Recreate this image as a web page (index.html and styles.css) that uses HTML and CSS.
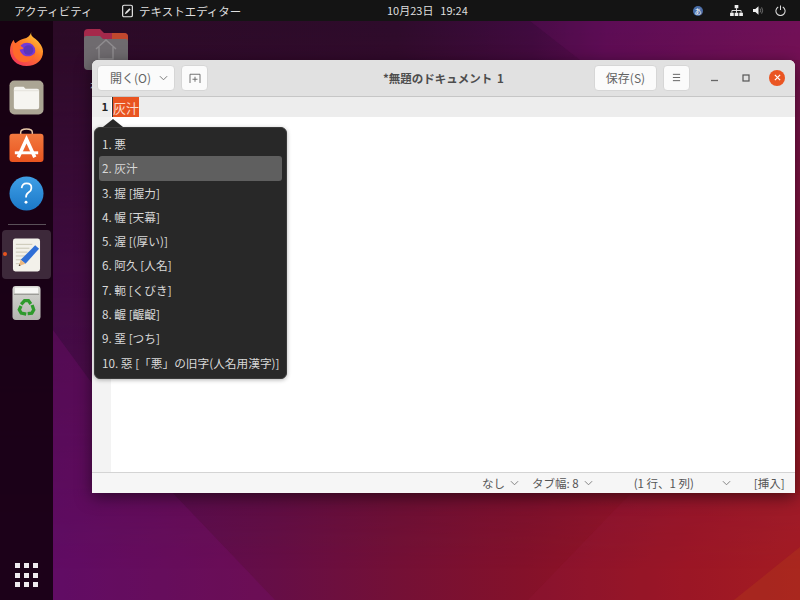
FILE: index.html
```html
<!DOCTYPE html>
<html lang="ja">
<head>
<meta charset="utf-8">
<title>テキストエディター</title>
<link rel="stylesheet" href="styles.css">
</head>
<body>
<div class="screen">
  <svg class="wallpaper" viewBox="0 0 800 600" preserveAspectRatio="none" aria-hidden="true">
    <defs>
      <linearGradient id="wallTop" gradientUnits="userSpaceOnUse" x1="53" y1="0" x2="800" y2="0">
        <stop offset="0" stop-color="#2b0a26"/>
        <stop offset="0.46" stop-color="#2e0b2b"/>
        <stop offset="0.64" stop-color="#3f0a3f"/>
        <stop offset="0.74" stop-color="#560c50"/>
        <stop offset="1" stop-color="#6f1152"/>
      </linearGradient>
      <linearGradient id="wallBottom" gradientUnits="userSpaceOnUse" x1="53" y1="0" x2="800" y2="0">
        <stop offset="0" stop-color="#560c5e"/>
        <stop offset="0.3" stop-color="#660e46"/>
        <stop offset="0.46" stop-color="#741036"/>
        <stop offset="0.63" stop-color="#84112a"/>
        <stop offset="0.85" stop-color="#9b161f"/>
        <stop offset="1" stop-color="#a51c1c"/>
      </linearGradient>
      <linearGradient id="fade" x1="0" y1="0" x2="0" y2="1">
        <stop offset="0.05" stop-color="#fff"/>
        <stop offset="0.95" stop-color="#000"/>
      </linearGradient>
      <mask id="fadeMask"><rect width="800" height="600" fill="url(#fade)"/></mask>
    </defs>
    <rect width="800" height="600" fill="url(#wallBottom)"/>
    <rect width="800" height="600" fill="url(#wallTop)" mask="url(#fadeMask)"/>
    <polygon points="53,330 170,490 275,600 53,600" fill="#7c1078" opacity=".28"/>
    <polygon points="528,600 629,495 800,495 800,600" fill="#a0184a" opacity=".15"/>
    <polygon points="734,600 800,547 800,600" fill="#b23a1a" opacity=".4"/>
    <polygon points="580,60 800,60 800,21 530,21" fill="#7a1070" opacity=".18"/>
  </svg>

  <header class="topbar">
    <div class="top-left">
      <span class="activities">アクティビティ</span>
      <span class="app-menu">
        <svg class="app-icon" viewBox="0 0 12 14"><rect x="0.700" y="0.700" width="10.600" height="12.600" rx="1.500" fill="none" stroke="#e6e6e6" stroke-width="1.300"/><path d="M3 10.500l1-2.500 4-4 1.400 1.400-4 4z" fill="#e6e6e6"/></svg>
        テキストエディター
      </span>
    </div>
    <div class="clock">10月23日&nbsp; 19:24</div>
    <div class="tray">
      <span class="ime">あ</span>
      <svg class="tray-net" viewBox="0 0 14 12"><path d="M5 0h4v3.500H5zM0 8.500h4V12H0zM10 8.500h4V12h-4zM5 8.500h4V12H5z" fill="#eee"/><path d="M7 3.500v5M2 8.500V6h10v2.500" fill="none" stroke="#eee"/></svg>
      <svg class="tray-vol" viewBox="0 0 14 12"><path d="M0 4h3l4-3.500v11L3 8H0z" fill="#eee"/><path d="M9 3.500q1.500 2.500 0 5M11 2q2.500 4 0 8" fill="none" stroke="#888"/></svg>
      <svg class="tray-pow" viewBox="0 0 12 12"><path d="M3.500 2.200a5 5 0 1 0 5 0M6 0.500v5" fill="none" stroke="#ddd" stroke-width="1.100"/></svg>
    </div>
  </header>

  <div class="desk">
    <nav class="dock">
      <svg class="dock-icon" viewBox="0 0 36 36">
        <defs>
          <linearGradient id="ffo" x1="0.850" y1="0" x2="0.150" y2="1"><stop offset="0" stop-color="#ffd43a"/><stop offset="0.45" stop-color="#ff7a25"/><stop offset="1" stop-color="#f0305f"/></linearGradient>
        </defs>
        <path d="M23 0c-1 3 1 5 4 7 5 4 8 9 8 13 0 9-7 15-17 15C8 35 1 28 1 19 1 14 3 10 5 8c0 2 1 3 2 4 2-3 5-4 8-5 4-1 7-3 8-7z" fill="url(#ffo)"/>
        <circle cx="18.500" cy="19.500" r="8.500" fill="#7339d6"/>
        <path d="M4 13c2-1 4-3 8-3-1 1-2 2-2 3 3 2 5 3 5 4-1 1-3 1-4 1 1 4 4 7 8 7 3 0 6-1 8-4-1 6-6 10-11 10-7 0-12-6-12-12z" fill="#ff6a2a"/>
        <circle cx="20" cy="18.500" r="5" fill="#5a35b8"/>
      </svg>
      <svg class="dock-icon" viewBox="0 0 36 36">
        <rect x="0.500" y="0.500" width="35" height="35" rx="5" fill="#aba594"/>
        <path d="M5 9q0-2 2-2h8l2 2h12q2 0 2 2v17q0 2-2 2H7q-2 0-2-2z" fill="#f6f5f1"/>
        <path d="M5 11h26" stroke="#e4e2db"/>
      </svg>
      <svg class="dock-icon" viewBox="0 0 36 36">
        <defs><linearGradient id="bag" x1="0" y1="0" x2="0" y2="1"><stop offset="0" stop-color="#f2793f"/><stop offset="1" stop-color="#e9541f"/></linearGradient></defs>
        <path d="M12 7V4.500q0-3.500 6-3.500t6 3.500V7" fill="none" stroke="#e8c8a8" stroke-width="1.500"/>
        <rect x="0.500" y="6" width="35" height="29" rx="3" fill="url(#bag)"/>
        <path d="M9.500 30L18 11.500 26.500 30" fill="none" stroke="#fff" stroke-width="3.600"/>
        <path d="M6 25.500h24" stroke="#fff" stroke-width="3"/>
      </svg>
      <svg class="dock-icon" viewBox="0 0 36 36">
        <defs><linearGradient id="hlp" x1="0" y1="0" x2="0" y2="1"><stop offset="0" stop-color="#3f9fe6"/><stop offset="1" stop-color="#1b78c8"/></linearGradient></defs>
        <circle cx="18" cy="18" r="17.500" fill="url(#hlp)"/>
        <path d="M13 12.500q0.500-5 5-5 5.500 0 5 5 0 2.500-3 4.500-2.500 1.500-2.500 5" fill="none" stroke="#fff" stroke-width="1.800"/>
        <circle cx="17.500" cy="27" r="1.500" fill="#fff"/>
      </svg>
      <div class="dock-sep"></div>
      <div class="dock-active">
        <span class="dock-dot"></span>
        <svg class="dock-icon" viewBox="0 0 30 36">
          <rect x="1" y="1" width="28" height="34" rx="2.500" fill="#f3f1ea"/>
          <path d="M4 7h17M4 11h14M4 15h12M4 19h10M4 23h8M4 27h6" stroke="#c9c5b3"/>
          <path d="M24 8l4 3.500-14 15.500-5-4z" fill="#2f6ed6"/>
          <path d="M9 23l5 4-7 2.500z" fill="#eab77f"/>
          <path d="M7.500 27.500l-.5 2 2-.7z" fill="#333"/>
        </svg>
      </div>
      <svg class="dock-icon trash" viewBox="0 0 30 36">
        <defs>
          <linearGradient id="trs" x1="0" y1="0" x2="0" y2="1"><stop offset="0" stop-color="#d6d6d2"/><stop offset="1" stop-color="#b4b4b0"/></linearGradient>
          <path id="rec" d="M9.500 19.500L13 15.500h4l2.500 3.500" fill="none" stroke="#2e9a2c" stroke-width="3.400"/>
        </defs>
        <rect x="0.500" y="0.500" width="29" height="35" rx="3.500" fill="url(#trs)"/>
        <rect x="3" y="2" width="24" height="6" fill="#f7f7f5"/>
        <path d="M2 9h26" stroke="#8d8d89"/>
        <g>
          <use href="#rec"/>
          <use href="#rec" transform="rotate(120 15 23)"/>
          <use href="#rec" transform="rotate(240 15 23)"/>
        </g>
      </svg>
      <div class="dock-spacer"></div>
      <div class="app-grid">
        <i></i><i></i><i></i><i></i><i></i><i></i><i></i><i></i><i></i>
      </div>
    </nav>

    <div class="desktop">
      <div class="home-folder">
        <svg class="folder" viewBox="0 0 44 42">
          <path d="M0 5q0-4 4-4h12l4 4h20q4 0 4 4v4H0z" fill="#a5294b"/>
          <path d="M28 5h12q4 0 4 4v4H28z" fill="#c1482e"/>
          <path d="M0 10q0-2 2-2h14l3 3h23q2 0 2 2v25q0 4-4 4H4q-4 0-4-4z" fill="#6f6b6f"/>
          <path d="M12 21l10-9 10 9M15 19v12h14V19" fill="none" stroke="#8f8c8f" stroke-width="1.500"/>
        </svg>
        <span class="folder-label">ホーム</span>
      </div>

      <section class="window">
        <div class="headerbar">
          <div class="hb-left">
            <button class="btn btn-open">開く(O)<svg class="chev" viewBox="0 0 10 6"><path d="M1 1l4 4 4-4" fill="none" stroke="#777" stroke-width="1.100"/></svg></button>
            <button class="btn btn-icon"><svg class="new-tab" viewBox="0 0 14 12"><path d="M1 12V1.500h12V12" fill="none" stroke="#666" stroke-width="1.100"/><path d="M7 4.500v6M4 7.500h6" stroke="#666" stroke-width="1.100"/></svg></button>
          </div>
          <div class="title">*無題のドキュメント 1</div>
          <div class="hb-right">
            <button class="btn btn-save">保存(S)</button>
            <button class="btn btn-icon"><svg class="hamburger" viewBox="0 0 10 9"><path d="M1 1h8M1 4.500h8M1 8h8" stroke="#666" stroke-width="1.100"/></svg></button>
            <div class="wm-buttons">
              <svg class="wm" viewBox="0 0 10 10"><path d="M1 7.500h7" stroke="#666" stroke-width="1.300"/></svg>
              <svg class="wm" viewBox="0 0 10 10"><rect x="2" y="2" width="6" height="6" fill="none" stroke="#555" stroke-width="1.200"/></svg>
              <span class="wm-close"><svg viewBox="0 0 8 8"><path d="M1 1l6 6M7 1L1 7" stroke="#fff" stroke-width="1.400"/></svg></span>
            </div>
          </div>
        </div>

        <div class="editor">
          <div class="gutter"><div class="line-no">1</div></div>
          <div class="text-area">
            <div class="current-line"><span class="preedit">灰汁</span></div>
          </div>
          <div class="candidates">
            <div class="arrow"></div>
            <div class="cand">1. 悪</div>
            <div class="cand selected">2. 灰汁</div>
            <div class="cand">3. 握 [握力]</div>
            <div class="cand">4. 幄 [天幕]</div>
            <div class="cand">5. 渥 [(厚い)]</div>
            <div class="cand">6. 阿久 [人名]</div>
            <div class="cand">7. 軛 [くびき]</div>
            <div class="cand">8. 齷 [齷齪]</div>
            <div class="cand">9. 堊 [つち]</div>
            <div class="cand">10. 惡 [「悪」の旧字(人名用漢字)]</div>
          </div>
        </div>

        <div class="statusbar">
          <span class="st st-lang">なし<svg class="chev-s" viewBox="0 0 10 6"><path d="M1 1l4 4 4-4" fill="none" stroke="#777" stroke-width="1"/></svg></span>
          <span class="st st-tab">タブ幅: 8<svg class="chev-s" viewBox="0 0 10 6"><path d="M1 1l4 4 4-4" fill="none" stroke="#777" stroke-width="1"/></svg></span>
          <span class="st st-pos">(1 行、1 列)</span>
          <span class="st st-pos-chev"><svg class="chev-s" viewBox="0 0 10 6"><path d="M1 1l4 4 4-4" fill="none" stroke="#777" stroke-width="1"/></svg></span>
          <span class="st st-ins">[挿入]</span>
        </div>
      </section>
    </div>
  </div>
</div>
</body>
</html>
```
FILE: styles.css
```css
* { box-sizing: border-box; }
html, body { margin: 0; padding: 0; }
body {
  width: 800px;
  height: 600px;
  overflow: hidden;
  font-family: "Noto Sans CJK JP", "Noto Sans", sans-serif;
  text-spacing-trim: space-all;
}
.screen {
  position: relative;
  width: 800px;
  height: 600px;
  display: flex;
  flex-direction: column;
}
.wallpaper {
  position: absolute;
  left: 0;
  top: 0;
  width: 800px;
  height: 600px;
}

/* top bar */
.topbar {
  position: relative;
  height: 21px;
  flex: none;
  background: #141414;
  color: #dedede;
  font-size: 11.500px;
  display: flex;
  align-items: center;
  justify-content: space-between;
}
.top-left { display: flex; align-items: center; padding-left: 14px; }
.activities { width: 108px; }
.app-menu { display: flex; align-items: center; gap: 6px; }
.app-icon { width: 11px; height: 14px; }
.clock {
  position: absolute;
  left: 387px;
  top: 0;
  font-size: 11px;
  line-height: 21px;
  word-spacing: 1px;
  white-space: nowrap;
}
.tray { display: flex; align-items: center; padding-right: 14px; }
.ime {
  width: 10px;
  height: 10px;
  border-radius: 50%;
  background: #4a6ea8;
  color: #fff;
  font-size: 7px;
  line-height: 10px;
  text-align: center;
  margin-right: 27px;
}
.tray-net { width: 13px; height: 11px; margin-right: 10px; }
.tray-vol { width: 11px; height: 11px; margin-right: 11px; }
.tray-pow { width: 11px; height: 11px; }

/* desk */
.desk {
  position: relative;
  flex: 1;
  display: flex;
  min-height: 0;
}
.dock {
  width: 53px;
  flex: none;
  background: rgba(20, 0, 16, 0.88);
  display: flex;
  flex-direction: column;
  align-items: center;
  padding-top: 11px;
}
.dock-icon { width: 35px; height: 35px; display: block; margin-bottom: 13px; flex: none; }
.dock-sep { width: 38px; height: 1px; background: #5a5058; margin: 0 0 5px; flex: none; }
.dock-active {
  position: relative;
  width: 49px;
  height: 49px;
  background: rgba(255, 255, 255, 0.16);
  border-radius: 4px;
  display: flex;
  align-items: center;
  justify-content: center;
  flex: none;
  margin-bottom: 6px;
}
.dock-active .dock-icon { width: 29px; height: 36px; margin: 0; }
.dock-dot {
  position: absolute;
  left: 1px;
  top: 22px;
  width: 4px;
  height: 4px;
  border-radius: 50%;
  background: #e9541f;
}
.dock-icon.trash { width: 29px; height: 36px; }
.dock-spacer { flex: 1; }
.app-grid {
  display: grid;
  grid-template-columns: repeat(3, 5px);
  gap: 4.300px;
  margin-bottom: 13px;
}
.app-grid i { width: 5px; height: 5px; background: #f0eaf0; display: block; }

.desktop { position: relative; flex: 1; }
.home-folder {
  position: absolute;
  left: 31px;
  top: 7px;
  width: 44px;
  display: flex;
  flex-direction: column;
  align-items: center;
}
.folder { width: 44px; height: 42px; }
.folder-label { color: #eee; font-size: 11px; line-height: 20px; margin-top: 5px; white-space: nowrap; }

/* window */
.window {
  position: absolute;
  left: 39px;
  top: 39px;
  width: 703px;
  height: 433px;
  background: #fff;
  border-radius: 6px 6px 0 0;
  box-shadow: 0 4px 16px rgba(0, 0, 0, 0.5);
  display: flex;
  flex-direction: column;
}
.headerbar {
  height: 37px;
  flex: none;
  background: #e1e1e1;
  border-bottom: 1px solid #c6c6c6;
  border-radius: 6px 6px 0 0;
  display: flex;
  align-items: center;
  justify-content: space-between;
  position: relative;
  padding: 0 10px 1px 5px;
}
.hb-left, .hb-right { display: flex; align-items: center; gap: 6px; }
.btn {
  height: 26px;
  background: #fbfbfb;
  border: 1px solid #d6d6d6;
  border-radius: 4px;
  color: #636363;
  font: inherit;
  font-size: 12px;
  padding: 0;
  display: flex;
  align-items: center;
  justify-content: center;
}
.btn-open { width: 78px; gap: 8px; justify-content: flex-start; padding-left: 12px; }
.chev { width: 9px; height: 6px; }
.btn-icon { width: 27px; }
.new-tab { width: 12px; height: 10px; }
.hamburger { width: 9px; height: 9px; }
.btn-save { width: 63px; }
.title {
  position: absolute;
  left: 291px;
  top: 0;
  line-height: 37px;
  font-size: 11.500px;
  font-weight: 700;
  color: #4d4d4d;
  word-spacing: 2px;
  white-space: nowrap;
}
.wm-buttons { display: flex; align-items: center; gap: 21px; margin-left: 14px; }
.wm { width: 10px; height: 10px; }
.wm-close {
  width: 16px;
  height: 16px;
  border-radius: 50%;
  background: #ea5522;
  display: flex;
  align-items: center;
  justify-content: center;
  margin-left: -3px;
}
.wm-close svg { width: 7px; height: 7px; }

.editor {
  position: relative;
  flex: 1;
  display: flex;
  min-height: 0;
}
.gutter { width: 19px; flex: none; background: #f3f3f3; }
.line-no {
  height: 20px;
  background: #ededed;
  text-align: right;
  padding-right: 3px;
  font-family: "DejaVu Sans Mono", monospace;
  font-size: 11px;
  font-weight: 700;
  line-height: 21px;
  color: #222;
}
.text-area { flex: 1; min-width: 0; }
.current-line {
  height: 20px;
  background: #ededed;
  display: flex;
  border-left: 1px solid #333;
  margin-left: 1px;
}
.preedit {
  background: #e95420;
  color: #fbdccd;
  font-size: 13px;
  line-height: 21px;
  width: 26px;
  text-align: center;
  white-space: nowrap;
}

.candidates {
  position: absolute;
  left: 2px;
  top: 30px;
  width: 193px;
  height: 252px;
  background: #282828;
  border: 1px solid #3a3a3a;
  border-radius: 6px;
  padding: 4px 4px;
  color: #d8d8d8;
  font-size: 11.700px;
  box-shadow: 0 1px 4px rgba(0, 0, 0, 0.3);
  z-index: 2;
}
.arrow {
  position: absolute;
  left: 8px;
  top: -9px;
  width: 0;
  height: 0;
  border-left: 10px solid transparent;
  border-right: 10px solid transparent;
  border-bottom: 8px solid #282828;
}
.cand {
  height: 24.300px;
  line-height: 24px;
  padding-left: 3px;
  white-space: nowrap;
  border-radius: 3px;
}
.cand.selected { background: #5f5f5f; }

.statusbar {
  height: 21px;
  flex: none;
  background: #f6f6f6;
  border-top: 1px solid #d4d4d4;
  display: flex;
  align-items: center;
  color: #555;
  font-size: 11.500px;
  position: relative;
  z-index: 1;
}
.st { display: flex; align-items: center; gap: 5px; white-space: nowrap; }
.chev-s { width: 9px; height: 6px; }
.st-lang { margin-left: 390px; }
.st-tab { margin-left: 13px; }
.st-pos { margin-left: 41px; }
.st-pos-chev { margin-left: 28px; }
.st-ins { margin-left: 23px; }
```
